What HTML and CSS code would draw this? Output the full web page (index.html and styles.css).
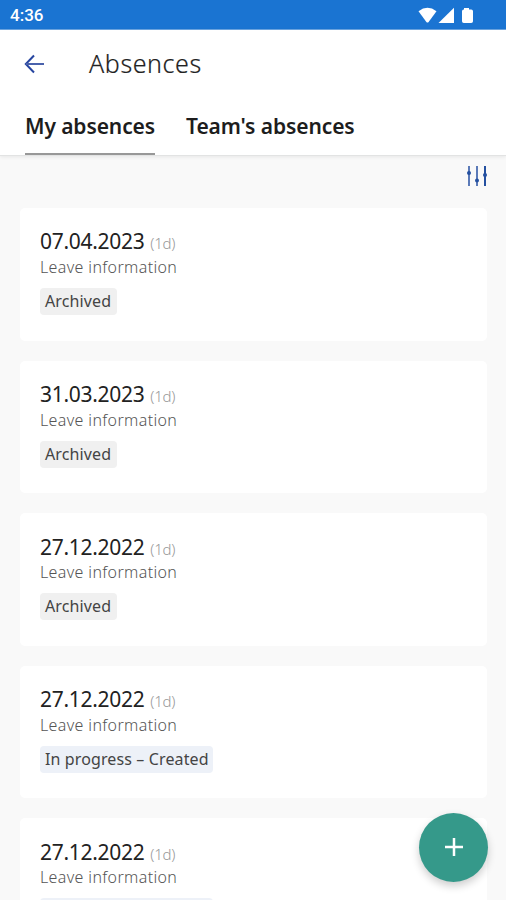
FILE: index.html
```html
<!DOCTYPE html>
<html lang="en">
<head>
<meta charset="utf-8">
<title>Absences</title>
<link rel="stylesheet" href="styles.css">
</head>
<body>
<div class="screen">
  <div class="status">
    <span class="clock">4:36</span>
    <svg class="signals" width="56" height="18" viewBox="0 0 56 18" fill="#fff">
      <path d="M0.5 4.2Q9.5-2.6 18.5 4.2L10.6 15Q9.5 16.2 8.4 15Z"/>
      <path d="M36 0.8V16H20.5Z"/>
      <path d="M46 1h5v1.5h2.2q1.8 0 1.8 1.8V14.300q0 1.800-1.800 1.800H45.800q-1.800 0-1.800-1.800V4.300q0-1.800 1.800-1.800H46Z"/>
    </svg>
  </div>
  <header class="header">
    <div class="bar">
      <svg class="back" width="22" height="20" viewBox="0 0 22 20" fill="none" stroke="#2645a0" stroke-width="2"><path d="M11 1.500L2.800 10l8.200 8.500"/><path d="M3 10h18" stroke="#4a62ac"/></svg>
      <h1 class="title">Absences</h1>
    </div>
    <nav class="tabs">
      <a class="tab active">My absences</a>
      <a class="tab team">Team's absences</a>
    </nav>
  </header>
  <div class="tools">
    <svg width="22" height="20" viewBox="0 0 22 20" fill="#2450a0">
      <g stroke="#5b7ab8" stroke-width="2"><path d="M3 0v20M11 0v20M19 0v20"/></g>
      <path d="M18 0h2v20h-2z"/>
      <circle cx="3" cy="7" r="2"/><circle cx="11" cy="14.500" r="2"/><circle cx="19" cy="9" r="2"/>
    </svg>
  </div>
  <main class="list">
    <article class="card"><div class="when"><span class="date">07.04.2023</span><span class="days">(1d)</span></div><div class="kind">Leave information</div><span class="tag">Archived</span></article>
    <article class="card"><div class="when"><span class="date">31.03.2023</span><span class="days">(1d)</span></div><div class="kind">Leave information</div><span class="tag">Archived</span></article>
    <article class="card"><div class="when"><span class="date">27.12.2022</span><span class="days">(1d)</span></div><div class="kind">Leave information</div><span class="tag">Archived</span></article>
    <article class="card"><div class="when"><span class="date">27.12.2022</span><span class="days">(1d)</span></div><div class="kind">Leave information</div><span class="tag progress">In progress – Created</span></article>
    <article class="card"><div class="when"><span class="date">27.12.2022</span><span class="days">(1d)</span></div><div class="kind">Leave information</div><span class="tag progress"></span></article>
  </main>
  <button class="fab" aria-label="Add"><svg width="18" height="18" viewBox="0 0 18 18" stroke="#fff" stroke-width="2.500"><path d="M9 0v18M0 9h18"/></svg></button>
</div>
</body>
</html>
```

FILE: styles.css
```css
* { box-sizing: border-box; }
body { margin: 0; font-family: "Noto Sans", sans-serif; background: #f9f9f9; }
.screen { position: relative; height: 900px; overflow: hidden; }
.status { height: 30px; padding: 1px 32px 0 10px; display: flex; justify-content: space-between; align-items: center; background: #1a74d2; border-bottom: 1px solid #6ba5e2; color: #fff; }
.clock { font: 500 17px/30px Roboto, sans-serif; letter-spacing: 0; }
.signals { margin-top: 1px; }
.header { height: 126px; background: #fff; border-bottom: 1px solid #e2e3e3; box-shadow: 0 1px 4px rgba(0,0,0,.08); }
.bar { height: 68px; padding-left: 23px; display: flex; align-items: center; gap: 44px; }
.title { margin: 0; padding-bottom: 2px; font-size: 25px; font-weight: 300; line-height: 34px; letter-spacing: .6px; color: #222; -webkit-text-stroke: .2px #222; }
.tabs { height: 57px; padding-left: 25px; display: flex; gap: 31px; }
.tab { height: 57px; font-size: 21px; font-weight: 600; line-height: 56px; letter-spacing: -.1px; color: #1d1d1d; white-space: nowrap; width: 130px; }
.active { border-bottom: 2px solid #989898; }
.team { width: 170px; }
.tools { height: 52px; padding: 10px 18px 0 0; display: flex; justify-content: flex-end; }
.list { padding: 0 19px 0 20px; display: flex; flex-direction: column; gap: 20px; }
.card { flex: none; height: 132.600px; padding: 19.400px 20px 0; border-radius: 5px; background: #fff; }
.when { height: 28px; display: flex; align-items: baseline; gap: 6px; line-height: 28px; white-space: nowrap; }
.date { font-size: 21px; letter-spacing: -.3px; color: #222; }
.days { font-size: 15px; font-weight: 300; letter-spacing: -.3px; color: #999; }
.kind { height: 23px; padding-top: .600px; font-size: 16px; font-weight: 300; line-height: 23px; letter-spacing: .36px; color: #555; white-space: nowrap; }
.tag { display: block; width: 77px; height: 27px; margin-top: 9.600px; padding-left: 5px; border-radius: 4px; background: #f0f0f0; font-size: 16px; line-height: 26px; letter-spacing: .12px; color: #444; white-space: nowrap; }
.progress { width: 173px; background: #edf1f8; }
.fab { position: absolute; left: 419px; top: 812.500px; width: 69px; height: 69px; padding: 0; border: 0; border-radius: 50%; background: #35998a; box-shadow: 0 4px 9px rgba(0,0,0,.2); display: flex; align-items: center; justify-content: center; }
```
